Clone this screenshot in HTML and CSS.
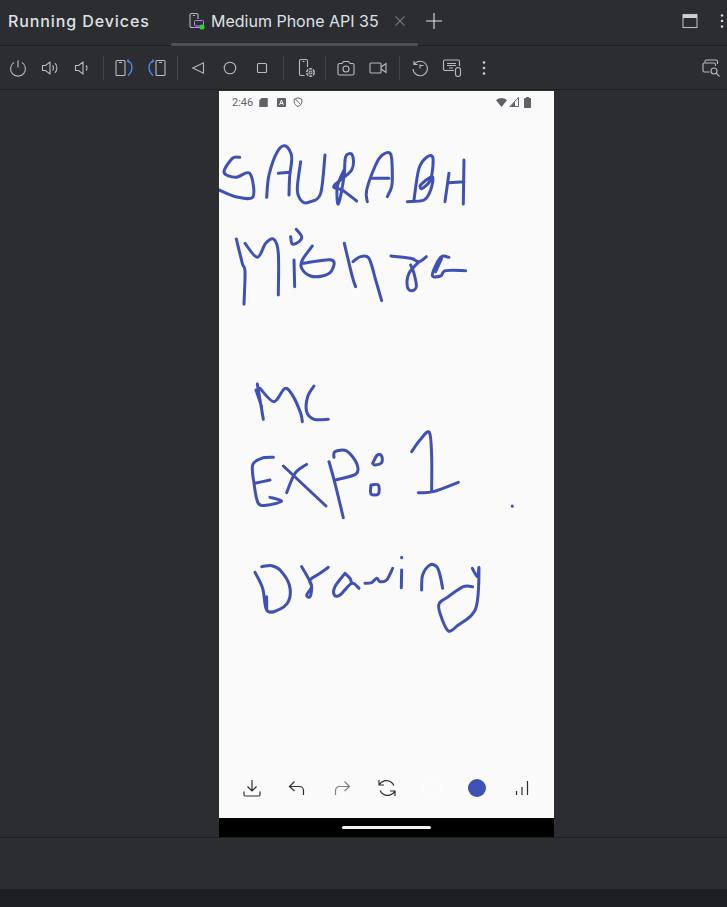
FILE: index.html
```html
<!DOCTYPE html>
<html lang="en">
<head>
	<meta charset="UTF-8">
	<title>Running Devices</title>
	<link rel="stylesheet" href="styles.css">
</head>
<body>

	<div class="tabBar">
		<span class="panelTitle">Running Devices</span>
		<div class="tab">
			<svg class="tabIcon" width="18" height="18" viewBox="0 0 18 18">
				<path class="line" d="M7 15.500H3.500a1.500 1.500 0 0 1-1.500-1.500V3a1.500 1.500 0 0 1 1.500-1.500h5A1.500 1.500 0 0 1 10 3v4"/>
				<path class="line" d="M5 3.500h2"/>
				<rect x="6.500" y="8.500" width="9" height="5.500" rx="1" fill="none" stroke="#b189f5"/>
				<path d="M5.500 15.500h9" stroke="#b189f5" fill="none"/>
				<circle cx="14" cy="15" r="2.600" fill="#2fd02f"/>
			</svg>
			<span class="tabName">Medium Phone API 35</span>
			<svg class="tabClose" width="12" height="12" viewBox="0 0 12 12"><path d="M1.500 1.500l9 9M10.500 1.500l-9 9"/></svg>
		</div>
		<svg class="tabAdd" width="18" height="18" viewBox="0 0 18 18"><path class="plus" d="M9 1v16M1 9h16"/></svg>
		<div class="tabRight">
			<svg width="16" height="16" viewBox="0 0 16 16"><rect class="line" x="1" y="1.500" width="14" height="13"/><rect x="1" y="1.500" width="14" height="3.500" fill="#ced0d6"/></svg>
			<svg width="16" height="16" viewBox="0 0 16 16"><circle cx="8" cy="2.500" r="1.300" fill="#ced0d6"/><circle cx="8" cy="8" r="1.300" fill="#ced0d6"/><circle cx="8" cy="13.500" r="1.300" fill="#ced0d6"/></svg>
		</div>
	</div>

	<div class="toolBar">
		<span class="btn"><svg width="18" height="18" viewBox="0 0 18 18"><path class="line" d="M5.200 3.400a7.400 7.400 0 1 0 7.600 0M9 1.200v7.400"/></svg></span>
		<span class="btn"><svg width="18" height="18" viewBox="0 0 18 18"><path class="line" d="M1.500 6.500h3L9 3v12l-4.500-3.500h-3zM11.500 6.500a3.500 3.500 0 0 1 0 5M14 4.200a7 7 0 0 1 0 9.600"/></svg></span>
		<span class="btn"><svg width="18" height="18" viewBox="0 0 18 18"><path class="line" d="M2.500 6.500h3L10 3v12l-4.500-3.500h-3zM13 6.500a3.500 3.500 0 0 1 0 5"/></svg></span>
		<i class="sep"></i>
		<span class="btn"><svg width="20" height="18" viewBox="0 0 20 18"><rect class="line" x="2" y="1.500" width="9" height="15" rx="1"/><path class="line" d="M5 3.500h3"/><path class="blue" d="M14 2c5 2 5.500 10 0 14.500M14.500 .5L13.500 2l2 1.500"/></svg></span>
		<span class="btn"><svg width="20" height="18" viewBox="0 0 20 18"><rect class="line" x="10" y="1.500" width="9" height="15" rx="1"/><path class="line" d="M13 3.500h3"/><path class="blue" d="M7 2C2 4 1.500 12 7 16.500M6.500 .5L7.500 2l-2 1.500"/></svg></span>
		<i class="sep"></i>
		<span class="btn"><svg width="14" height="14" viewBox="0 0 14 14"><path class="line" d="M12.500 1.800v10.400L1.800 7z"/></svg></span>
		<span class="btn"><svg width="16" height="16" viewBox="0 0 16 16"><circle class="line" cx="8" cy="8" r="5.800"/></svg></span>
		<span class="btn"><svg width="14" height="14" viewBox="0 0 14 14"><rect class="line" x="2.500" y="2.500" width="9" height="9" rx="1"/></svg></span>
		<i class="sep"></i>
		<span class="btn btnSettings"><svg width="18" height="20" viewBox="0 0 18 20"><path class="line" d="M6.500 17.500H3a1.500 1.500 0 0 1-1.500-1.500V3A1.500 1.500 0 0 1 3 1.500h5A1.500 1.500 0 0 1 9.500 3v6"/><path class="line" d="M4.500 3.500h2"/><circle class="line" cx="12.500" cy="14.500" r="1.500"/><circle class="line dash" cx="12.500" cy="14.500" r="3.800"/></svg></span>
		<i class="sep"></i>
		<span class="btn"><svg width="18" height="16" viewBox="0 0 18 16"><path class="line" d="M1 5a1.500 1.500 0 0 1 1.500-1.500H5L6.500 1.500h5L13 3.500h2.500A1.500 1.500 0 0 1 17 5v8.500a1.500 1.500 0 0 1-1.500 1.500h-13A1.500 1.500 0 0 1 1 13.500z"/><circle class="line" cx="9" cy="9" r="3"/></svg></span>
		<span class="btn"><svg width="18" height="14" viewBox="0 0 18 14"><rect class="line" x="1" y="2" width="11" height="10" rx="1"/><path class="line" d="M12 6l5-3.500v9L12 8"/></svg></span>
		<i class="sep"></i>
		<span class="btn"><svg width="18" height="18" viewBox="0 0 18 18"><path class="line" d="M3 2v3.500h3.500M3.200 5.500A7.200 7.200 0 1 1 2 10M9 5.500V9.500M9 6.500h3.500"/></svg></span>
		<span class="btn"><svg width="20" height="20" viewBox="0 0 20 20"><path class="line" d="M12 12.500H3A1.500 1.500 0 0 1 1.500 11V3.500A1.500 1.500 0 0 1 3 2h13a1.500 1.500 0 0 1 1.500 1.500V8"/><path class="line" d="M5 5.500h9M5 7.500h9M7 10h4"/><rect class="line" x="13.500" y="9.500" width="5" height="9" rx="2.500"/></svg></span>
		<span class="btn"><svg width="16" height="16" viewBox="0 0 16 16"><circle cx="8" cy="2.500" r="1.300" fill="#ced0d6"/><circle cx="8" cy="8" r="1.300" fill="#ced0d6"/><circle cx="8" cy="13.500" r="1.300" fill="#ced0d6"/></svg></span>
		<span class="btn btnEnd"><svg width="19" height="18" viewBox="0 0 19 18"><path class="line" d="M3 3.500V2.500A1.500 1.500 0 0 1 4.500 1H14a1.500 1.500 0 0 1 1.500 1.500V5"/><path class="line" d="M7.500 13H2.500A1.500 1.500 0 0 1 1 11.500v-6A1.500 1.500 0 0 1 2.500 4H12a1.500 1.500 0 0 1 1.500 1.500V7"/><circle class="line" cx="12" cy="12" r="3"/><path class="line" d="M14.200 14.200l3.300 3.300"/></svg></span>
	</div>

	<div class="stage">
		<div class="phone">
			<div class="statusBar">
				<span class="clock">2:46</span>
				<svg width="9" height="10" viewBox="0 0 9 10"><path class="solid" d="M2.500 1H8a.8.800 0 0 1 .8.800v7.400a.8.800 0 0 1-.8.800H1a.8.800 0 0 1-.8-.800V3.500z"/></svg>
				<svg class="iconA" width="9" height="9" viewBox="0 0 9 9"><rect class="solid" width="9" height="9" rx="1"/><path d="M2.500 7L4.500 2l2 5M3.300 5.500h2.400" fill="none" stroke="#fafafa"/></svg>
				<svg class="iconShield" width="10" height="10" viewBox="0 0 10 10"><path d="M5 .8l3.800 1.400v2.600c0 2.200-1.600 3.800-3.800 4.600C2.800 8.600 1.200 7 1.200 4.800V2.200zM2.500 2l5 5.500" fill="none" stroke="#5f6368"/></svg>
				<div class="statusRight">
					<svg width="11" height="9" viewBox="0 0 11 9"><path class="solid" d="M0 2.200C3 -.6 8 -.6 11 2.200L5.500 9z"/></svg>
					<svg width="10" height="10" viewBox="0 0 10 10"><path d="M9.500 .5v9H1z" fill="none" stroke="#5f6368"/><path class="solid" d="M6 4.500v5H1.500z"/></svg>
					<svg class="iconBattery" width="7" height="11" viewBox="0 0 7 11"><path class="solid" d="M2 0h3v1h1.200a.8.800 0 0 1 .8.800v8.400a.8.800 0 0 1-.8.800H.8a.8.800 0 0 1-.8-.800V1.800A.8.800 0 0 1 .8 1H2z"/></svg>
				</div>
			</div>

			<svg class="canvas" width="335" height="652" viewBox="219 113 335 652">
				<!-- SAURABH / Mishra -->
				<g class="ink" transform="translate(219 140) scale(.3333)">
					<path d="M62 52L40 55L15 97L50 112L92 100L102 170L50 170L0 150"/>
					<path d="M143 172L150 105L175 35L200 18L218 50L212 110L210 165M178 100L210 97"/>
					<path d="M245 65L235 150L250 185L275 185L305 160L318 45"/>
					<path d="M375 90L355 140L358 192L375 110L380 50L400 45L398 90L345 138L370 150L413 183"/>
					<path d="M445 185L443 150L470 75L490 45L515 42L520 100L518 140L505 170M455 115L510 115"/>
					<path d="M565 185L615 180L635 150L640 110L605 135L610 145L635 118L642 55L625 50L600 85L585 180"/>
					<path d="M690 100L678 185M735 60L733 192M690 128L735 125"/>
					<path d="M52 297L70 370L78 395L75 493M78 310L115 352L140 310L165 298L178 340L178 465"/>
					<path d="M215 290L220 312L240 305L248 290L232 268M225 360L227 440"/>
					<path d="M280 318L250 360L248 385L275 408L310 408L338 392L338 360L252 370"/>
					<path d="M376 310L400 410L410 440M402 365L425 350L450 355L470 420L488 482"/>
					<path d="M516 348L575 355L600 365L622 350M600 365L570 400L565 440L578 452L592 440L585 400L575 375"/>
					<path d="M690 352L665 352L640 405L665 408L680 392L740 392M668 355L650 395"/>
				</g>
				<!-- MC / EXP: 1 -->
				<g class="ink" transform="translate(240 370) scale(.3333)">
					<path d="M52 42L70 148M48 60L65 110M60 55L102 95L135 55L160 80L182 130L187 155"/>
					<path d="M222 48L203 80L200 125L222 148L265 148"/>
					<path d="M100 262L65 265L38 285L42 340L55 400L85 405L125 393L90 382M45 340L90 330"/>
					<path d="M130 288L258 408M200 283L165 310L140 368"/>
					<path d="M267 275L285 340L310 443M282 262L285 245L320 243L350 280L348 312L285 330"/>
					<path d="M398 280L412 255L425 258L425 278L405 285L398 280M393 345L415 345L415 372L393 372L393 345"/>
					<path d="M515 245L540 210L568 187L575 260L575 365M535 368L580 365L655 337"/>
					<path d="M817 408L817 409"/>
				</g>
				<!-- Drawing -->
				<g class="ink" transform="translate(240 545) scale(.3333)">
					<path d="M45 82L68 130L80 195L110 197L145 170L148 120L120 75L95 62L65 65M80 155L80 195"/>
					<path d="M185 65L205 100L215 125L200 150L210 155L215 125L210 105L240 85L265 67"/>
					<path d="M315 85L285 125L283 150L300 150L335 115L357 130M315 85L330 100L335 115"/>
					<path d="M375 115L395 113L410 100L420 110L440 105L458 70"/>
					<path d="M485 75L484 128M485 37L485 38"/>
					<path d="M545 135L548 90L570 60L590 65L600 90L608 130"/>
					<path d="M697 70L712 95L717 70L712 170L695 210L655 240L625 258L600 205L598 175L625 155L670 125L698 125"/>
				</g>
			</svg>

			<div class="drawTools">
				<span class="tool"><svg width="18" height="18" viewBox="0 0 18 18"><path class="dark" d="M9 1v11M4.500 7.500L9 12l4.500-4.500M1 12.500v3a1.500 1.500 0 0 0 1.500 1.500h13a1.500 1.500 0 0 0 1.500-1.500v-3"/></svg></span>
				<span class="tool"><svg width="18" height="16" viewBox="0 0 18 16"><path class="dark" d="M6.500 1.500L1.500 6.500l5 4.500M1.500 6.500h10a4 4 0 0 1 4 4V15"/></svg></span>
				<span class="tool"><svg width="18" height="16" viewBox="0 0 18 16"><path class="faded" d="M11.500 1.500l5 5-5 4.500M16.500 6.500h-10a4 4 0 0 0-4 4V15"/></svg></span>
				<span class="tool"><svg width="20" height="18" viewBox="0 0 20 18"><path class="dark" d="M2 1v5h5M2 6c2-4 8-6 12-3 1.500 1 2.300 2 2.800 3.500M18 17v-5h-5M18 12c-2 4-8 6-12 3-1.500-1-2.300-2-2.800-3.500"/></svg></span>
				<span class="tool"><i class="dot dotWhite"></i></span>
				<span class="tool"><i class="dot dotBlue"></i></span>
				<span class="tool"><svg width="14" height="16" viewBox="0 0 14 16"><path class="dark" d="M1.500 11v4M7 7v8M12.500 1v14"/></svg></span>
			</div>

			<div class="navBar"><i class="navPill"></i></div>
		</div>
	</div>

	<div class="footPanel"></div>
	<div class="footBar"></div>

	<script src="ink.js"></script>
</body>
</html>
```
FILE: styles.css
```css
*{box-sizing: border-box;}
html,body{height: 100%;}
body{margin: 0;background: #2b2d30;color: #dfe1e5;font-family: Inter,"Noto Sans",sans-serif;display: flex;flex-direction: column;overflow: hidden;}
svg{display: block;flex: none;}
.line{fill: none;stroke: #b8bbc2;stroke-width: 1.1;}
.plus{fill: none;stroke: #dfe1e5;stroke-width: 1.1;}
.blue{fill: none;stroke: #548af7;stroke-width: 1.3;}
.dash{stroke-dasharray: 3 1;stroke-width: 1.6;}

.tabBar{height: 46px;flex: none;display: flex;align-items: center;padding: 0 0 4px 8px;border-bottom: 1px solid #1e1f22;}
.panelTitle{width: 163px;font-size: 16px;font-weight: 500;letter-spacing: .9px;white-space: nowrap;}
.tab{width: 247px;height: 45px;padding-left: 17px;margin-bottom: -4px;display: flex;align-items: center;padding-bottom: 4px;position: relative;}
.tab:after{content: "";position: absolute;left: 0;right: 0;bottom: -1px;height: 3px;border-radius: 2px;background: #4e5157;}
.tabName{margin-left: 5px;font-size: 16px;white-space: nowrap;}
.tabClose{margin-left: 15px;}
.tabClose path{fill: none;stroke: #6f737a;stroke-width: 1.2;}
.tabAdd{margin-left: 7px;}
.tabRight{margin-left: auto;display: flex;gap: 16px;margin-right: -3px;}

.toolBar{height: 44px;flex: none;display: flex;align-items: center;padding-left: 2px;border-bottom: 1px solid #1e1f22;}
.btn{width: 32px;height: 32px;display: flex;align-items: center;justify-content: center;flex: none;}
.btnSettings{margin: 0 -3px 0 3px;}
.btnEnd{margin-left: auto;}
.sep{width: 1px;height: 24px;margin: 0 4px 0 5px;background: #43454a;flex: none;}

.stage{height: 748px;flex: none;padding: 1px 0 0 219px;border-bottom: 1px solid #1e1f22;}
.phone{width: 335px;height: 746px;background: #fafafa;display: flex;flex-direction: column;}
.statusBar{height: 22px;flex: none;padding: 0 23px 0 13px;display: flex;align-items: center;color: #5f6368;font-family: Roboto,sans-serif;font-size: 11px;}
.clock{margin-right: 6px;}
.iconA{margin-left: 9px;}
.iconShield{margin-left: 7px;}
.statusRight{margin-left: auto;display: flex;align-items: center;gap: 2px;}
.iconBattery{margin-left: 3px;}
.solid{fill: #5f6368;}

.canvas{flex: none;}
.ink path{fill: none;stroke: #3f51b5;stroke-width: 9;stroke-linecap: round;stroke-linejoin: round;}

.drawTools{height: 53px;flex: none;padding: 0 10px 7px;display: flex;align-items: center;}
.tool{width: 45px;height: 45px;display: flex;align-items: center;justify-content: center;}
.dark{fill: none;stroke: #2b2d30;stroke-width: 1.2;}
.faded{fill: none;stroke: #7a7f88;stroke-width: 1.2;}
.dot{display: block;border-radius: 50%;}
.dotWhite{width: 20px;height: 20px;background: #fafafa;border: 1px solid #fff;}
.dotBlue{width: 18px;height: 18px;background: #3f51b5;}

.navBar{height: 19px;flex: none;background: #000;display: flex;align-items: center;justify-content: center;}
.navPill{width: 89px;height: 3px;border-radius: 2px;background: #f2f2f2;}

.footPanel{height: 51px;flex: none;background: #2b2d30;}
.footBar{flex: 1;background: #1e1f22;}
```
FILE: ink.js
```js
// turns the straight strokes of the drawing into soft hand drawn curves
var paths=document.querySelectorAll('.ink path');
for(var i=0;i<paths.length;i++){
	var strokes=paths[i].getAttribute('d').split('M').slice(1);
	var d='';
	for(var s=0;s<strokes.length;s++){
		var pts=strokes[s].trim().split('L').map(function(p){
			return p.trim().split(' ').map(Number);
		});
		d+='M'+pts[0].join(' ');
		for(var j=0;j<pts.length-1;j++){
			var a=pts[Math.max(j-1,0)],b=pts[j],c=pts[j+1],e=pts[Math.min(j+2,pts.length-1)];
			d+='C'+(b[0]+(c[0]-a[0])/6)+' '+(b[1]+(c[1]-a[1])/6)+' '+(c[0]-(e[0]-b[0])/6)+' '+(c[1]-(e[1]-b[1])/6)+' '+c[0]+' '+c[1];
		}
	}
	paths[i].setAttribute('d',d);
}
```
